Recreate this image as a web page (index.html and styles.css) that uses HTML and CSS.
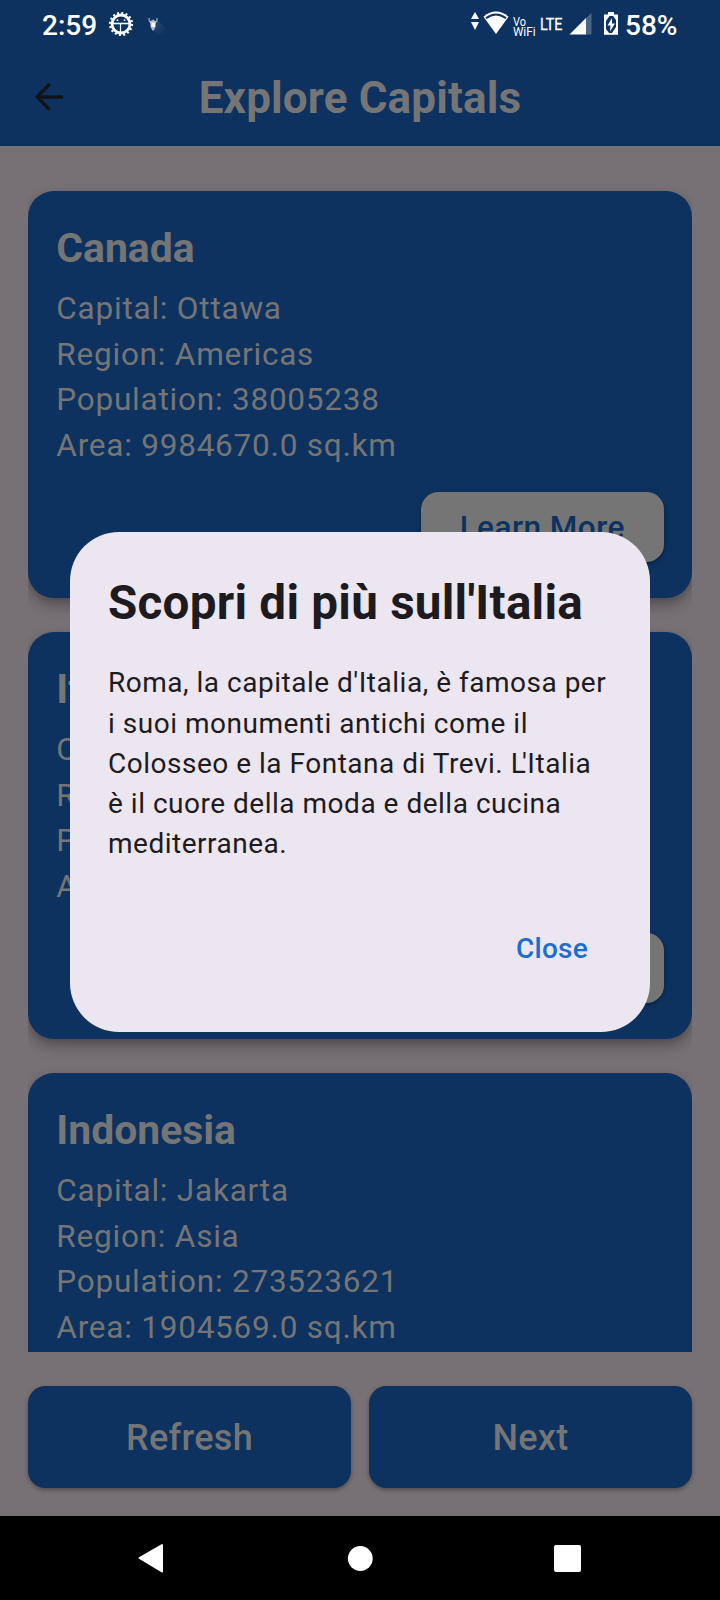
FILE: index.html
```html
<!DOCTYPE html>
<html lang="it">
<head>
<meta charset="utf-8">
<title>Explore Capitals</title>
<link rel="stylesheet" href="styles.css">
</head>
<body>
<div class="screen">
  <header class="header">
    <div class="status">
      <span class="clock">2:59</span>
      <svg class="gear" width="26" height="26" viewBox="0 0 26 26">
        <circle cx="13" cy="13" r="11" fill="none" stroke="#fff" stroke-width="2.2" stroke-dasharray="2 2.320"/>
        <circle cx="13" cy="13" r="9" fill="none" stroke="#fff" stroke-width="2.8"/>
        <path d="M4 12.500H22" stroke="#fff" stroke-width="1.6"/>
        <path d="M12.500 13V22" stroke="#fff" stroke-width="1.2"/>
        <circle cx="9.500" cy="9.200" r=".9" fill="#fff"/><circle cx="16.500" cy="9.200" r=".9" fill="#fff"/>
      </svg>
      <svg class="bug" width="20" height="20" viewBox="0 0 20 20">
        <defs><linearGradient id="fade" x1="0" y1="0" x2="1" y2="1"><stop offset="0" stop-color="#fff" stop-opacity=".12"/><stop offset="1" stop-color="#fff" stop-opacity="0"/></linearGradient></defs>
        <path d="M9 3L17 10V18H11L5 13Z" fill="url(#fade)"/>
        <path d="M1.200 1V4L3 5.500M9 1V4L7 5.500" fill="none" stroke="#fff" stroke-opacity=".6" stroke-width="1.2"/>
        <path d="M2 4.500L5 2.500 8 4.500 7.500 10 5.800 13.500H4.400L2.600 10Z" fill="#fff" fill-opacity=".65"/>
        <path d="M3.500 5.500H6.800V10H3.500Z" fill="#fff"/>
      </svg>
      <svg class="network" width="206" height="28" viewBox="0 0 206 28">
        <g fill="#fff">
          <path d="M1 10L5 3L9 10ZM1 13H9L5 21Z"/>
          <path d="M13.500 7.700Q26-2.500 38.500 7.700L26 25Z"/>
          <path d="M99.500 25.500L116 9V25.500Z"/>
          <path d="M116 9L121.500 4V25.500H116Z" opacity=".25"/>
          <path d="M134 5.500H138V3H144V5.500H148V25.700H134Z"/>
        </g>
        <path d="M16 9.300Q26 1.700 36 9.300" fill="none" stroke="#0d325f" stroke-width="1.900"/>
        <path d="M139.500 7H143L146 11V18L142 24H139L136 20V12Z" fill="#0d325f"/>
        <path d="M142 9L137.500 16.500H140.500L140 22.500L145 14.500H142Z" fill="#fff"/>
        <g class="netlabel">
          <text x="43" y="17" font-size="12.500" textLength="13" lengthAdjust="spacingAndGlyphs">Vo</text>
          <text x="43" y="26.500" font-size="12.500" textLength="22.500" lengthAdjust="spacingAndGlyphs">WiFi</text>
          <text class="lte" x="70" y="20.500" font-size="17" textLength="22.500" lengthAdjust="spacingAndGlyphs">LTE</text>
        </g>
      </svg>
      <span class="battery">58%</span>
    </div>
    <div class="appbar">
      <svg class="back" width="28" height="28" viewBox="0 0 28 28"><path d="M14.700 1L2 14L14.700 26.500M2 14H28" fill="none" stroke="#111417" stroke-width="3.300"/></svg>
      <h1 class="apptitle">Explore Capitals</h1>
    </div>
  </header>

  <main class="list">
    <article class="card">
      <h2 class="name">Canada</h2>
      <p class="fact">Capital: Ottawa</p><p class="fact">Region: Americas</p><p class="fact">Population: 38005238</p><p class="fact">Area: 9984670.0 sq.km</p>
      <button class="more">Learn More</button>
    </article>
    <article class="card">
      <h2 class="name">Italy</h2>
      <p class="fact">Capital: Rome</p><p class="fact">Region: Europe</p><p class="fact">Population: 59554023</p><p class="fact">Area: 301336.0 sq.km</p>
      <button class="more">Learn More</button>
    </article>
    <article class="card">
      <h2 class="name">Indonesia</h2>
      <p class="fact">Capital: Jakarta</p><p class="fact">Region: Asia</p><p class="fact">Population: 273523621</p><p class="fact">Area: 1904569.0 sq.km</p>
    </article>
  </main>

  <div class="actions">
    <button class="action">Refresh</button>
    <button class="action">Next</button>
  </div>

  <nav class="sysnav">
    <svg width="720" height="84" viewBox="0 0 720 84" fill="#fff">
      <path d="M139.500 42L162 29V55.500Z" stroke="#fff" stroke-width="2" stroke-linejoin="round"/>
      <circle cx="360.300" cy="42.500" r="12.400"/>
      <rect x="554" y="29" width="27" height="27" rx="2"/>
    </svg>
  </nav>

  <section class="dialog" role="dialog">
    <h2 class="dialogtitle">Scopri di più sull'Italia</h2>
    <p class="dialogtext">Roma, la capitale d'Italia, è famosa per<br>i suoi monumenti antichi come il<br>Colosseo e la Fontana di Trevi. <span class="kern">L</span>'Italia<br>è il cuore della moda e della cucina<br>mediterranea.</p>
    <button class="close">Close</button>
  </section>
</div>
</body>
</html>
```
FILE: styles.css
```css
* { box-sizing: border-box; }
body { margin: 0; font-family: Roboto, "Noto Sans", sans-serif; }
h1, h2, p { margin: 0; font-weight: 400; }
button { border: 0; padding: 0; font-family: inherit; }
svg { display: block; flex: none; }

.screen {
  position: relative;
  width: 720px;
  height: 1600px;
  overflow: hidden;
  display: flex;
  flex-direction: column;
  background: #777175;
}

.header { height: 146px; flex: none; background: #0d325f; }
.status { height: 49px; display: flex; align-items: flex-start; padding: 9px 0 0 42px; color: #fff; white-space: nowrap; }
.clock, .battery { font-size: 28px; line-height: 33px; font-weight: 500; }
.clock { width: 65px; }
.gear { margin: 2px 0 0 .5px; }
.bug { margin: 8px 0 0 14.5px; }
.network { margin: 0 0 0 302px; }
.battery { margin-left: -51px; }
.netlabel { fill: #fff; }
.lte { stroke: #fff; stroke-width: .3px; }

.appbar { height: 96px; display: flex; align-items: center; padding-left: 35px; }
.apptitle { flex: 1; margin: 2px 63px 0 0; text-align: center; font-size: 44px; font-weight: 700; line-height: 56px; letter-spacing: .15px; color: #757575; }

.list {
  height: 1178px;
  flex: none;
  margin: 28px 28px 0;
  padding-top: 17.4px;
  display: flex;
  flex-direction: column;
  gap: 35px;
  overflow: hidden;
}
.card {
  height: 406.4px;
  margin-bottom: -.4px;
  flex: none;
  display: flex;
  flex-direction: column;
  padding: 29px 28px 28px;
  border-radius: 26px;
  background: #0d325f;
  color: #757575;
  box-shadow: 0 7px 14px rgba(0, 0, 0, .3), 0 2px 5px rgba(0, 0, 0, .08);
}
.name { font-size: 40.9px; line-height: 56px; font-weight: 700; margin-bottom: 9.6px; padding-left: .3px; }
.fact { font-size: 31.5px; line-height: 45.6px; letter-spacing: .78px; padding-left: .3px; }
.more {
  align-self: flex-end;
  width: 243.5px;
  height: 70px;
  margin-top: 23.8px;
  flex: none;
  border-radius: 17.5px;
  background: #757575;
  color: #0d325f;
  font-size: 31.5px;
  font-weight: 500;
  letter-spacing: .47px;
  box-shadow: 0 2px 4px rgba(0, 0, 0, .35);
}

.actions { display: flex; gap: 18px; padding: 34px 28px 28px; height: 164px; }
.action {
  flex: 1;
  height: 102px;
  padding-top: 1.5px;
  border-radius: 17.5px;
  background: #0d325f;
  color: #757575;
  font-size: 36px;
  font-weight: 500;
  letter-spacing: .3px;
  box-shadow: 0 2px 4px rgba(0, 0, 0, .35);
}
.sysnav { height: 84px; flex: none; background: #000; }

.dialog {
  position: absolute;
  left: 70px;
  top: 532px;
  width: 580px;
  height: 500px;
  display: flex;
  flex-direction: column;
  padding: 39px 38px 38px;
  border-radius: 49px;
  background: #ece6f0;
  color: #1d1b20;
}
.dialogtitle { font-size: 47.6px; line-height: 65px; font-weight: 700; letter-spacing: .25px; white-space: nowrap; }
.dialogtext { margin-top: 27.4px; font-size: 28px; line-height: 40.25px; letter-spacing: .51px; white-space: nowrap; }
.kern { letter-spacing: -3.8px; }
.close { align-self: flex-end; margin: 64.6px 24px 0 0; background: none; color: #1c6dd0; font-size: 28px; line-height: 40px; font-weight: 500; letter-spacing: .25px; }
```
